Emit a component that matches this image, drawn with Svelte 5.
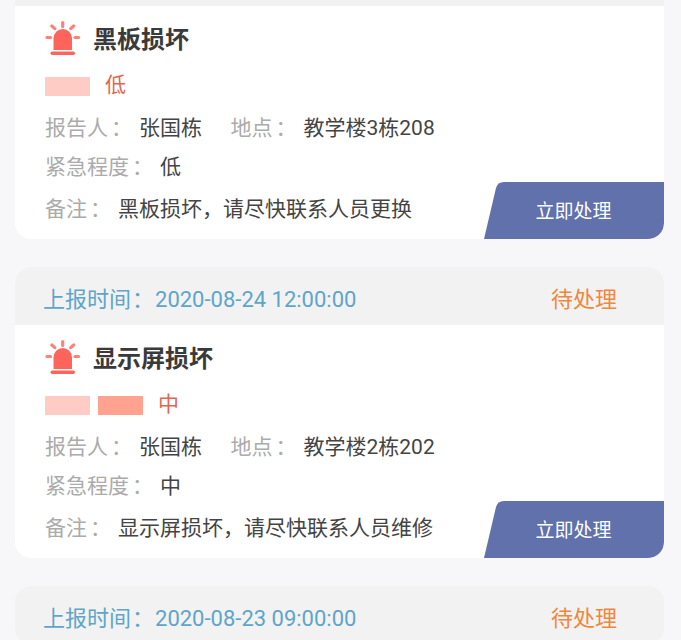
<script>
  const cards = [
    { title: '黑板损坏', level: 1, levelText: '低', place: '教学楼3栋208', note: '黑板损坏，请尽快联系人员更换' },
    { time: '2020-08-24 12:00:00', title: '显示屏损坏', level: 2, levelText: '中', place: '教学楼2栋202', note: '显示屏损坏，请尽快联系人员维修' },
    { time: '2020-08-23 09:00:00' }
  ];
</script>

<div class="page">
  <div class="list">
    {#each cards as c}
      <section class="card">
        {#if c.time}
          <header class="head">
            <span class="time">上报时间<span class="colon">：</span>{c.time}</span>
            <span class="status">待处理</span>
          </header>
        {:else}
          <div class="sliver"></div>
        {/if}
        {#if c.title}
          <div class="body">
            <div class="title-row">
              <svg class="alarm" viewBox="0 0 36 36" width="36" height="36" aria-hidden="true">
                <path d="M8.500 30V18.500a9.250 9.500 0 0 1 18.500 0V30z" fill="#ff645c"/>
                <rect x="5.500" y="31.500" width="24.500" height="3.500" rx="1.750" fill="#ff645c"/>
                <g stroke="#ff8078" stroke-width="3.200" stroke-linecap="round">
                  <path d="M17.700 2.500V6.500"/>
                  <path d="M6.800 6l3 2.600"/>
                  <path d="M28.700 6l-3 2.600"/>
                  <path d="M2 17.500H5.500"/>
                  <path d="M30 17.500h3.500"/>
                </g>
              </svg>
              <h2>{c.title}</h2>
            </div>
            <div class="level">
              <i class="sw one"></i>
              {#if c.level > 1}<i class="sw two"></i>{/if}
              <span>{c.levelText}</span>
            </div>
            <div class="row r1">
              <span class="lab">报告人<span class="colon">：</span></span><span class="val name">张国栋</span>
              <span class="lab">地点<span class="colon">：</span></span><span class="val">{c.place}</span>
            </div>
            <div class="row r2">
              <span class="lab">紧急程度<span class="colon">：</span></span><span class="val">{c.levelText}</span>
            </div>
            <div class="row r3">
              <span class="lab">备注<span class="colon">：</span></span><span class="val">{c.note}</span>
            </div>
            <div class="action">
              <svg viewBox="0 0 180 57" width="180" height="57" aria-hidden="true">
                <path d="M0 57L12 6Q13.500 0 20 0H180V41Q180 57 164 57Z" fill="#6071ab"/>
              </svg>
              <span>立即处理</span>
            </div>
          </div>
        {/if}
      </section>
    {/each}
  </div>
</div>

<style>
  :global(body) { margin: 0; background: #f7f7fa; }
  .page {
    height: 640px;
    overflow: hidden;
    font-family: Roboto, "Noto Sans CJK SC", sans-serif;
  }
  .list {
    display: flex;
    flex-direction: column;
    gap: 28px;
    margin: 0 17px 0 15px;
  }
  .card {
    border-radius: 16px;
    overflow: hidden;
    background: #fff;
    flex: none;
  }
  .card:first-child { border-radius: 0 0 16px 16px; }
  .sliver { height: 6px; background: #f2f2f2; }
  .head {
    height: 58px;
    background: #f2f2f2;
    display: flex;
    align-items: center;
    justify-content: space-between;
    padding: 2px 47px 0 28px;
    box-sizing: border-box;
    font-size: 22px;
  }
  .time { color: #5ea5ca; }
  .time .colon { margin: 0 1px 0 1px; }
  .status { color: #f0873a; }
  .colon { font-family: "Noto Sans CJK SC", sans-serif; margin: 0 7px 0 3px; }
  .body {
    position: relative;
    height: 233px;
    padding: 13px 0 0 30px;
    box-sizing: border-box;
  }
  .title-row {
    display: flex;
    align-items: center;
    gap: 12px;
    height: 38px;
  }
  .alarm { flex: none; }
  h2 {
    margin: 0;
    font-size: 24px;
    line-height: 38px;
    font-weight: 700;
    color: #3a3a3a;
    font-family: "Noto Sans CJK SC", sans-serif;
  }
  .level {
    display: flex;
    align-items: center;
    gap: 8px;
    height: 30px;
    margin-top: 11px;
    color: #e0674f;
    font-size: 21px;
  }
  .level span { margin-left: 7px; }
  .sw { display: block; width: 45px; height: 19px; margin-top: 6px; }
  .one { background: #ffccc5; }
  .two { background: #ffa390; }
  .row {
    display: flex;
    align-items: center;
    height: 30px;
    font-size: 21px;
    white-space: nowrap;
    font-weight: 400;
  }
  .r1 { margin-top: 13px; }
  .r2 { margin-top: 9px; }
  .r3 { margin-top: 12px; }
  .lab { color: #ababab; }
  .val { color: #444; }
  .name { margin-right: 28.500px; }
  .action {
    position: absolute;
    right: 0;
    bottom: 0;
    width: 180px;
    height: 57px;
    display: flex;
    align-items: center;
    justify-content: center;
    color: #fff;
    font-size: 19px;
  }
  .action svg { position: absolute; inset: 0; display: block; }
  .action span { position: relative; margin: -3px 0 0 -1px; }
</style>
